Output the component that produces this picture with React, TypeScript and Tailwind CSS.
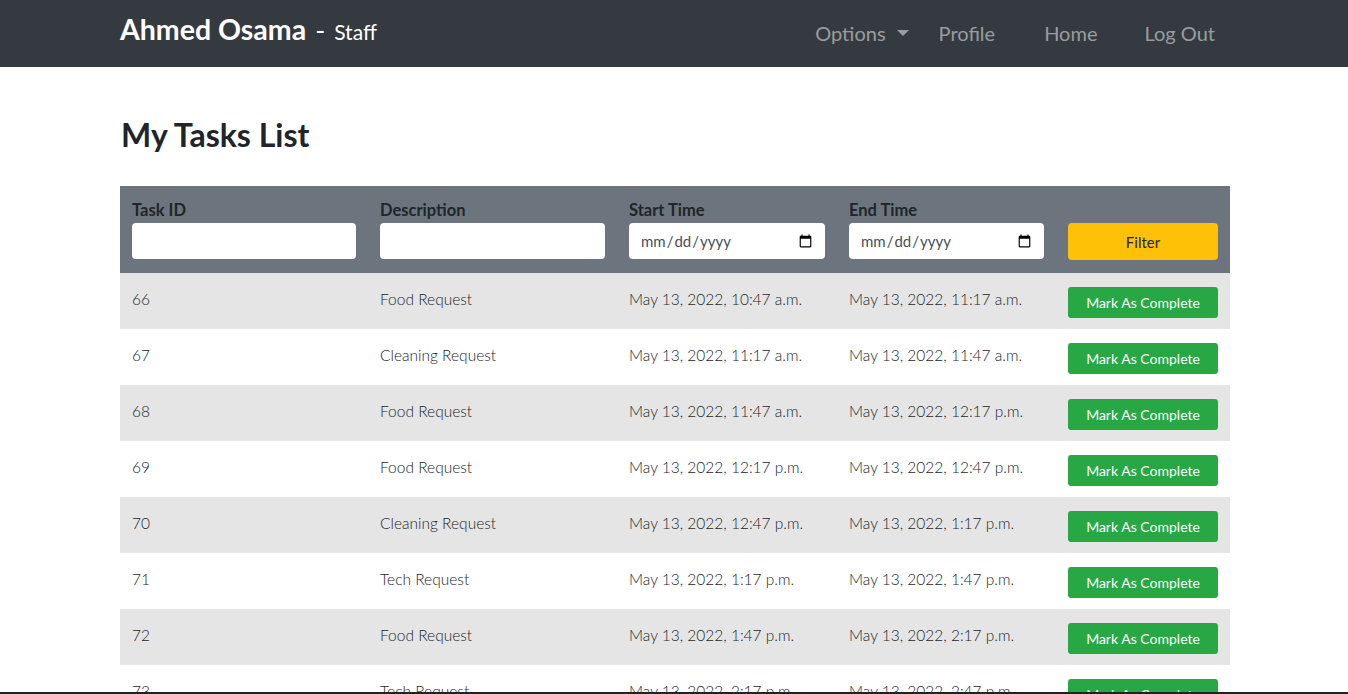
import React from "react";

type Task = {
  id: number;
  description: string;
  start: string;
  end: string;
};

const tasks: Task[] = [
  { id: 66, description: "Food Request", start: "May 13, 2022, 10:47 a.m.", end: "May 13, 2022, 11:17 a.m." },
  { id: 67, description: "Cleaning Request", start: "May 13, 2022, 11:17 a.m.", end: "May 13, 2022, 11:47 a.m." },
  { id: 68, description: "Food Request", start: "May 13, 2022, 11:47 a.m.", end: "May 13, 2022, 12:17 p.m." },
  { id: 69, description: "Food Request", start: "May 13, 2022, 12:17 p.m.", end: "May 13, 2022, 12:47 p.m." },
  { id: 70, description: "Cleaning Request", start: "May 13, 2022, 12:47 p.m.", end: "May 13, 2022, 1:17 p.m." },
  { id: 71, description: "Tech Request", start: "May 13, 2022, 1:17 p.m.", end: "May 13, 2022, 1:47 p.m." },
  { id: 72, description: "Food Request", start: "May 13, 2022, 1:47 p.m.", end: "May 13, 2022, 2:17 p.m." },
  { id: 73, description: "Tech Request", start: "May 13, 2022, 2:17 p.m.", end: "May 13, 2022, 2:47 p.m." },
  { id: 74, description: "Food Request", start: "May 13, 2022, 2:47 p.m.", end: "May 13, 2022, 3:17 p.m." },
];

export default function App() {
  return (
    <div className="min-h-screen bg-white text-[#212529] font-['Lato','Open_Sans',sans-serif]">
      {/* ===== Navbar ===== */}
      <nav className="bg-[#343a40] h-[67px]">
        <div className="w-[1140px] mx-auto pl-[16px] pr-[14px] h-full flex items-center justify-between">
          <div className="flex items-baseline text-white -mt-[8px]">
            <span className="text-[28.5px] font-bold">Ahmed Osama</span>
            <span className="text-[27px] ml-[9px]">-</span>
            <span className="text-[21px] ml-[9px]">Staff</span>
          </div>
          <ul className="flex items-center text-[20px] text-white/50 mr-[7px] -mt-[2px]">
            <li className="flex items-center px-[8px]">
              Options
              <span className="ml-[11px] mt-[1px] w-0 h-0 border-l-[6px] border-r-[6px] border-t-[6px] border-l-transparent border-r-transparent border-t-white/50" />
            </li>
            <li className="px-[8px] ml-[14px]">Profile</li>
            <li className="px-[8px] ml-[33px]">Home</li>
            <li className="px-[8px] ml-[31px]">Log Out</li>
          </ul>
        </div>
      </nav>

      {/* ===== Content ===== */}
      <div className="w-[1140px] mx-auto pl-[16px] pr-[14px]">
        <h2 className="text-[32px] font-bold mt-[49px] mb-[32px] leading-[1.2] pl-px">My Tasks List</h2>

        <table className="w-full border-collapse text-[15.5px]">
          <colgroup>
            <col className="w-[248px]" />
            <col className="w-[249px]" />
            <col className="w-[220px]" />
            <col className="w-[219px]" />
            <col />
          </colgroup>
          <thead>
            <tr className="bg-[#6c757d] h-[87px]">
              {["Task ID", "Description"].map((label) => (
                <th key={label} className="px-[12px] pt-[12px] pb-[13px] text-left font-bold align-top">
                  <div className="leading-[24px] text-[16.5px]">{label}</div>
                  <input type="text" className="mt-px w-full h-[36px] bg-white rounded-[4px] outline-none px-3" />
                </th>
              ))}
              {["Start Time", "End Time"].map((label) => (
                <th key={label} className="px-[12px] pt-[12px] pb-[13px] text-left font-bold align-top">
                  <div className="leading-[24px] text-[16.5px]">{label}</div>
                  <input
                    type="date"
                    className="mt-px w-full h-[36px] bg-white rounded-[4px] outline-none pl-[11px] pr-[10px] text-[15px] font-normal text-[#495057]"
                  />
                </th>
              ))}
              <th className="px-[12px] pt-[12px] pb-[13px] align-bottom">
                <button className="w-full h-[37px] bg-[#ffc107] rounded-[4px] text-[15px] font-normal text-[#212529]">
                  Filter
                </button>
              </th>
            </tr>
          </thead>
          <tbody>
            {tasks.map((t, i) => (
              <tr key={t.id} className={i % 2 === 0 ? "bg-[#e5e5e5]" : "bg-white"}>
                <td className="px-[12px] pt-[14px] pb-[17px] align-top leading-[24px] font-light">{t.id}</td>
                <td className="px-[12px] pt-[14px] pb-[17px] align-top leading-[24px] font-light">{t.description}</td>
                <td className="px-[12px] pt-[14px] pb-[17px] align-top leading-[24px] font-light">{t.start}</td>
                <td className="px-[12px] pt-[14px] pb-[17px] align-top leading-[24px] font-light">{t.end}</td>
                <td className="px-[12px] pt-[14px] pb-[11px] align-top">
                  <button className="w-full h-[31px] bg-[#28a745] rounded-[3px] text-white text-[14px]">
                    Mark As Complete
                  </button>
                </td>
              </tr>
            ))}
          </tbody>
        </table>
      </div>

      <div className="fixed bottom-0 left-0 right-0 h-[2px] bg-[#222]" />
    </div>
  );
}
